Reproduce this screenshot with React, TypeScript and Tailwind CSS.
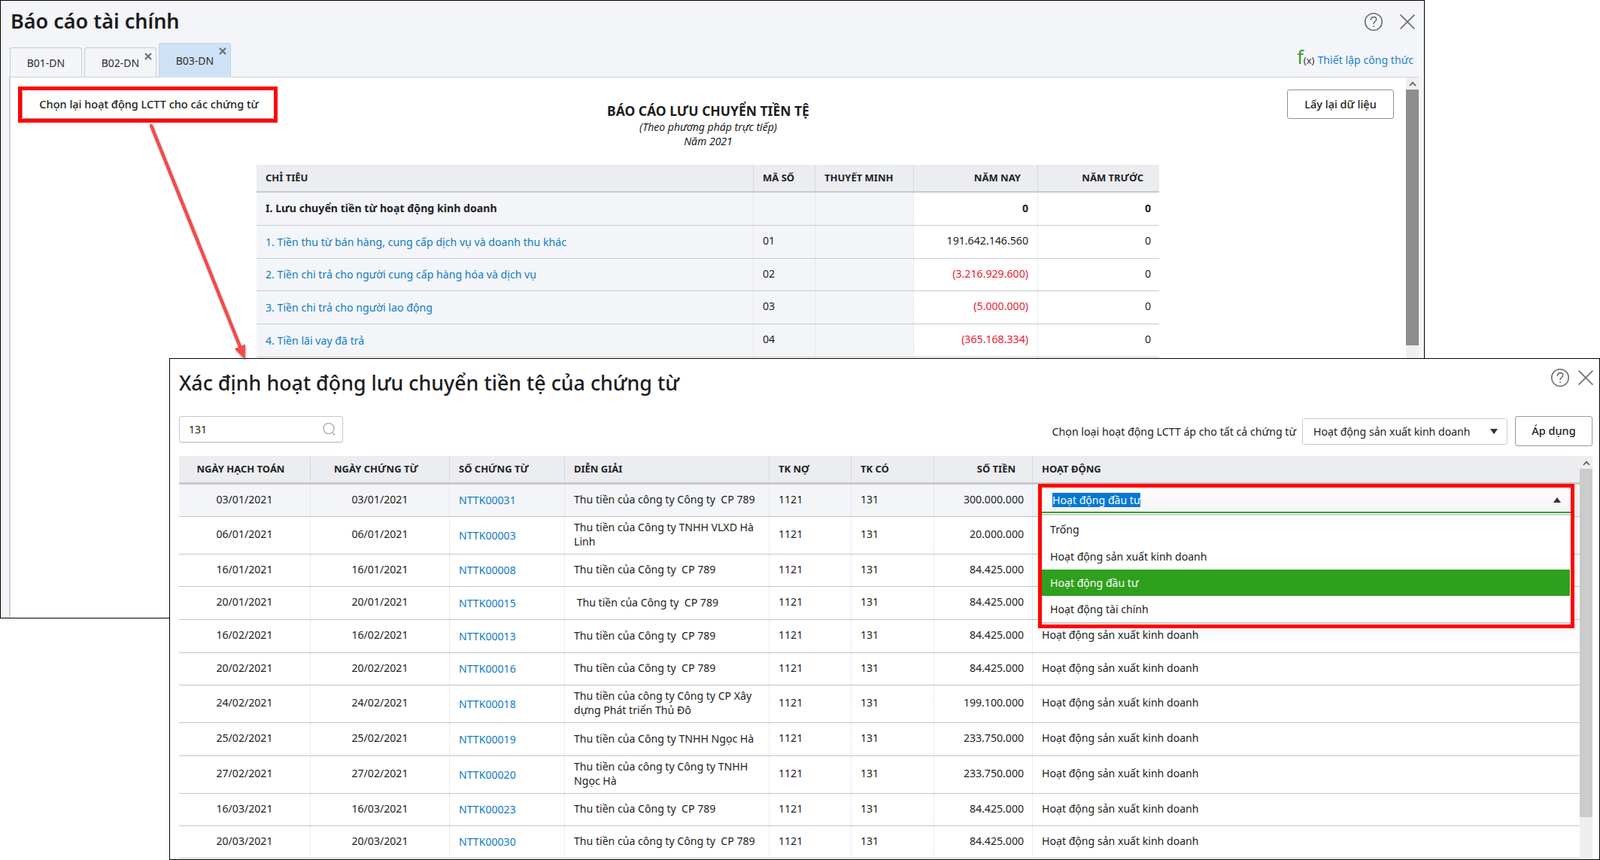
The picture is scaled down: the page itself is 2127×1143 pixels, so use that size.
import React from "react";

const Help = () => (
  <svg width="26" height="26" viewBox="0 0 26 26" fill="none" stroke="#6f6f6f" strokeWidth="1.6" className="shrink-0">
    <circle cx="13" cy="13" r="11.3" />
    <path d="M9.4 10.2c0-2.2 1.6-3.6 3.7-3.6s3.6 1.3 3.6 3.2c0 1.5-.9 2.3-2 3.1-1 .7-1.6 1.3-1.6 2.7" strokeLinecap="round" />
    <circle cx="13.1" cy="18.9" r="1" fill="#6f6f6f" stroke="none" />
  </svg>
);

const Close = () => (
  <svg width="20" height="20" viewBox="0 0 20 20" stroke="#6f6f6f" strokeWidth="1.7" className="shrink-0">
    <path d="M0.6 0.6 19.4 19.4M19.4 0.6 0.6 19.4" />
  </svg>
);

const TabX = () => (
  <svg width="10" height="10" viewBox="0 0 10 10" stroke="#6b7075" strokeWidth="2.2">
    <path d="M1 1 9 9M9 1 1 9" />
  </svg>
);

const Up = () => (
  <svg width="10" height="7" viewBox="0 0 10 7" fill="none" stroke="#5f5f5f" strokeWidth="1.8">
    <path d="M1 6 5 1.8 9 6" />
  </svg>
);

const backRows = [
  { name: "1. Tiền thu từ bán hàng, cung cấp dịch vụ và doanh thu khác", code: "01", now: "191.642.146.560", neg: false, h: "h-[44px]" },
  { name: "2. Tiền chi trả cho người cung cấp hàng hóa và dịch vụ", code: "02", now: "(3.216.929.600)", neg: true, h: "h-[43px]" },
  { name: "3. Tiền chi trả cho người lao động", code: "03", now: "(5.000.000)", neg: true, h: "h-[44px]" },
  { name: "4. Tiền lãi vay đã trả", code: "04", now: "(365.168.334)", neg: true, h: "h-[44px]" },
];

const backGrid = "grid grid-cols-[661px_82px_131px_165px_161px]";
const frontGrid = "grid grid-cols-[175px_185px_153px_272px_109px_110px_131px_727px]";
const dotted = "border-r border-dotted border-[#dcdcdc]";
const act = "Hoạt động sản xuất kinh doanh";

const frontRows = [
  { d: "03/01/2021", doc: "NTTK00031", t: "Thu tiền của công ty Công ty  CP 789", a: "300.000.000", h: "h-[43px]", act: "" },
  { d: "06/01/2021", doc: "NTTK00003", t: "Thu tiền của Công ty TNHH VLXD Hà Linh", a: "20.000.000", h: "h-[50px]", act: "" },
  { d: "16/01/2021", doc: "NTTK00008", t: "Thu tiền của Công ty  CP 789", a: "84.425.000", h: "h-[43px]", act: "" },
  { d: "20/01/2021", doc: "NTTK00015", t: " Thu tiền của Công ty  CP 789", a: "84.425.000", h: "h-[44px]", act: "" },
  { d: "16/02/2021", doc: "NTTK00013", t: "Thu tiền của Công ty  CP 789", a: "84.425.000", h: "h-[44px]", act },
  { d: "20/02/2021", doc: "NTTK00016", t: "Thu tiền của Công ty  CP 789", a: "84.425.000", h: "h-[43px]", act },
  { d: "24/02/2021", doc: "NTTK00018", t: "Thu tiền của công ty Công ty CP Xây dựng Phát triển Thủ Đô", a: "199.100.000", h: "h-[50px]", act },
  { d: "25/02/2021", doc: "NTTK00019", t: "Thu tiền của Công ty TNHH Ngọc Hà", a: "233.750.000", h: "h-[44px]", act },
  { d: "27/02/2021", doc: "NTTK00020", t: "Thu tiền của công ty Công ty TNHH Ngọc Hà", a: "233.750.000", h: "h-[50px]", act },
  { d: "16/03/2021", doc: "NTTK00023", t: "Thu tiền của Công ty  CP 789", a: "84.425.000", h: "h-[43px]", act },
  { d: "20/03/2021", doc: "NTTK00030", t: "Thu tiền của công ty Công ty  CP 789", a: "84.425.000", h: "h-[43px]", act },
];

function BackWindow() {
  return (
    <div className="absolute left-0 top-0 flex h-[822px] w-[1894px] flex-col overflow-hidden border border-black bg-[#f3f5f9]">
      <div className="flex h-[55px] shrink-0 items-start justify-between pl-[13px] pr-[12px]">
        <h1 className="mt-[9px] text-[27px] font-semibold leading-[36px] text-[#1c1c1c]">Báo cáo tài chính</h1>
        <div className="mt-[15px] flex items-center gap-[22px]">
          <Help />
          <Close />
        </div>
      </div>
      <div className="flex h-[46px] shrink-0 items-end pl-[12px] pr-[14px]">
        <div className="mb-[-1px] flex h-[46px] items-end text-[14px] text-[#2b2b2b]">
          <div className="relative flex h-[40px] w-[96px] items-center justify-center rounded-t-[3px] border border-b-0 border-[#c9ccd2]">B01-DN</div>
          <div className="relative ml-[3px] flex h-[40px] w-[96px] items-center justify-center rounded-t-[3px] border border-b-0 border-[#c9ccd2]">
            B02-DN
            <span className="absolute right-[5px] top-[6px] flex"><TabX /></span>
          </div>
          <div className="relative ml-[3px] flex h-[46px] w-[96px] items-center justify-center rounded-t-[3px] border border-b-0 border-[#c4d3e4] bg-[#cde2f7]">
            B03-DN
            <span className="absolute right-[5px] top-[5px] flex"><TabX /></span>
          </div>
        </div>
        <div className="mb-[10px] ml-auto flex items-baseline text-[14.15px] leading-[24px]">
          <span className="font-['Liberation_Serif',serif] text-[25px] leading-[24px] text-[#3b9c22]">f</span>
          <span className="mr-[4px] text-[13px] text-[#333333]">(x)</span>
          <a className="text-[#1b83cf]">Thiết lập công thức</a>
        </div>
      </div>
      <div className="mr-[7px] ml-[11px] flex min-h-0 flex-1 border-t border-l-2 border-[#cdd0d4] bg-white">
        <div className="min-w-0 flex-1">
          <div className="grid h-[116px] grid-cols-[1fr_auto_1fr]">
            <div>
              <div className="ml-[10px] mt-[12px] h-[48px] w-[345px] border-[5px] border-[#ff0000]">
                <button className="flex h-full w-full items-center justify-center rounded-[3px] border-b border-l border-[#999999] bg-white pl-[2px] text-[14.5px] font-medium text-[#1c1c1c]">
                  Chọn lại hoạt động LCTT cho các chứng từ
                </button>
              </div>
            </div>
            <div className="pt-[33px] text-center text-[#1c1c1c]">
              <div className="text-[17.5px] font-bold leading-[23px]">BÁO CÁO LƯU CHUYỂN TIỀN TỆ</div>
              <div className="text-[14px] italic leading-[19px]">(Theo phương pháp trực tiếp)</div>
              <div className="text-[14px] italic leading-[19px]">Năm 2021</div>
            </div>
            <div className="flex items-start justify-end pr-[16px] pt-[16px]">
              <button className="h-[39px] w-[142px] rounded-[3px] border border-[#8f8f8f] bg-white text-[14.5px] font-medium text-[#1c1c1c]">Lấy lại dữ liệu</button>
            </div>
          </div>
          <div className="ml-[327px] w-[1200px] text-[14.15px] text-[#222222]">
            <div className={`${backGrid} h-[37px] border-b-[2px] border-[#c8c8c8] bg-[#ebedf0] text-[13px] font-bold`}>
              <div className="flex items-center border-r border-[#d8d9dc] pl-3">CHỈ TIÊU</div>
              <div className="flex items-center border-r border-[#d8d9dc] pl-3">MÃ SỐ</div>
              <div className="flex items-center border-r border-[#d8d9dc] pl-3">THUYẾT MINH</div>
              <div className="flex items-center justify-end border-r border-[#d8d9dc] pr-[22px]">NĂM NAY</div>
              <div className="flex items-center justify-end pr-[21px]">NĂM TRƯỚC</div>
            </div>
            <div className={`${backGrid} h-[44px] border-b border-[#c8ccd2] font-bold`}>
              <div className={`flex items-center bg-[#f3f5f9] pb-[2px] pl-3 ${dotted}`}>I. Lưu chuyển tiền từ hoạt động kinh doanh</div>
              <div className={`bg-[#f3f5f9] ${dotted}`} />
              <div className={`bg-[#f3f5f9] ${dotted}`} />
              <div className={`flex items-center justify-end pb-[2px] pr-3 ${dotted}`}>0</div>
              <div className="flex items-center justify-end pb-[2px] pr-[11px]">0</div>
            </div>
            {backRows.map((r) => (
              <div key={r.code} className={`${backGrid} ${r.h} border-b border-[#c8ccd2]`}>
                <div className={`flex items-center bg-[#f3f5f9] pl-3 text-[#0f7cc4] ${dotted}`}>{r.name}</div>
                <div className={`flex items-center bg-[#f3f5f9] pb-[3px] pl-3 ${dotted}`}>{r.code}</div>
                <div className={`bg-[#f3f5f9] ${dotted}`} />
                <div className={`flex items-center justify-end pb-[3px] pr-3 ${dotted} ${r.neg ? "text-[#e8202e]" : ""}`}>{r.now}</div>
                <div className="flex items-center justify-end pb-[3px] pr-[11px]">0</div>
              </div>
            ))}
          </div>
        </div>
        <div className="flex w-[17px] shrink-0 flex-col bg-[#f0f0f0]">
          <div className="flex h-[16px] items-center justify-center pt-[1px]"><Up /></div>
          <div className="h-[340px] bg-[#8e8e8e]" />
        </div>
      </div>
    </div>
  );
}

function Dropdown() {
  return (
    <div className="absolute left-[1154px] top-[37px] h-[192px] w-[713px] border-[5px] border-[#ff0000] bg-white text-[14.1px] text-[#222222] shadow-[0_4px_14px_rgba(0,0,0,0.06)]">
      <div className="flex h-[34px] items-center justify-between border-b-2 border-[#3b9a2c] bg-gradient-to-b from-white to-[#f4f4f4] pl-[14px] pr-[13px]">
        <span className="bg-[#0078d7] leading-[19px] text-white">Hoạt động đầu tư</span>
        <svg width="10" height="7" viewBox="0 0 10 7" fill="#333333"><path d="M5 0 10 7H0z" /></svg>
      </div>
      <div className="mt-[1px] border-t-2 border-b-2 border-[#c9ccd0] pr-[1px] pt-0">
        <div className="flex h-[37px] items-center pl-[11px] pt-[1px]">Trống</div>
        <div className="flex h-[35px] items-center pl-[11px]">{act}</div>
        <div className="flex h-[35px] items-center bg-[#2ea01e] pl-[11px] text-white">Hoạt động đầu tư</div>
        <div className="flex h-[35px] items-center pl-[11px]">Hoạt động tài chính</div>
      </div>
    </div>
  );
}

function FrontWindow() {
  return (
    <div className="absolute left-[225px] top-[476px] flex h-[667px] w-[1902px] flex-col overflow-hidden border border-black bg-white text-[#222222]">
      <div className="flex h-[76px] shrink-0 items-start justify-between pl-3 pr-[8px]">
        <h2 className="mt-[14px] text-[26.8px] font-medium leading-[36px] text-[#1c1c1c]">Xác định hoạt động lưu chuyển tiền tệ của chứng từ</h2>
        <div className="mt-[12px] flex items-center gap-[11px]">
          <Help />
          <Close />
        </div>
      </div>
      <div className="flex h-[53px] shrink-0 items-start justify-between pl-3 pr-[9px]">
        <div className="flex h-[35px] w-[218px] items-center justify-between rounded-[3px] border border-[#c8c8c8] pl-[12px] pr-[8px] text-[14px] shadow-[0_1px_1px_rgba(0,0,0,0.12)]">
          <span>131</span>
          <svg width="18" height="20" viewBox="0 0 18 20" fill="none" stroke="#b4b4b4" strokeWidth="1.6">
            <circle cx="8" cy="8.5" r="7" />
            <path d="M13.5 14 16 17.5" />
          </svg>
        </div>
        <div className="flex h-[40px] items-center text-[14.1px]">
          <span className="mr-[8px] pt-[1px] text-[14.2px]">Chọn loại hoạt động LCTT áp cho tất cả chứng từ</span>
          <div className="flex h-[35px] w-[273px] items-center justify-between rounded-[3px] border border-[#cccccc] pl-[14px] pr-[12px]">
            <span className="pt-[1px]">{act}</span>
            <svg width="10" height="7" viewBox="0 0 10 7" fill="#333333"><path d="M0 0h10L5 7z" /></svg>
          </div>
          <button className="ml-[10px] h-[40px] w-[103px] rounded-[3px] border border-[#999999] bg-white text-[14.5px] font-medium text-[#1c1c1c]">Áp dụng</button>
        </div>
      </div>
      <div className="relative flex min-h-0 flex-1 pl-3 pr-[9px]">
        <div className="w-[1862px] shrink-0 text-[14.1px]">
          <div className={`${frontGrid} h-[38px] border-b-[3px] border-[#c8c8c8] bg-[#ebedf0] pt-[1px] text-[13px] font-bold text-[#222222]`}>
            <div className="flex items-center justify-center border-r border-[#d8d9dc] pr-[10px]">NGÀY HẠCH TOÁN</div>
            <div className="flex items-center justify-center border-r border-[#d8d9dc] pr-[10px]">NGÀY CHỨNG TỪ</div>
            <div className="flex items-center border-r border-[#d8d9dc] pl-3">SỐ CHỨNG TỪ</div>
            <div className="flex items-center border-r border-[#d8d9dc] pl-3">DIỄN GIẢI</div>
            <div className="flex items-center border-r border-[#d8d9dc] pl-3">TK NỢ</div>
            <div className="flex items-center border-r border-[#d8d9dc] pl-3">TK CÓ</div>
            <div className="flex items-center justify-end border-r border-[#d8d9dc] pr-[22px]">SỐ TIỀN</div>
            <div className="flex items-center pl-3">HOẠT ĐỘNG</div>
          </div>
          {frontRows.map((r, i) => (
            <div key={r.doc} className={`${frontGrid} ${r.h} border-b border-[#c6c6c6] ${i === 0 ? "bg-[#f3f5f9]" : ""}`}>
              <div className={`flex items-center justify-center pb-[3px] ${dotted}`}>{r.d}</div>
              <div className={`flex items-center justify-center pb-[3px] ${dotted}`}>{r.d}</div>
              <div className={`flex items-center pl-3 text-[#0f7cc4] ${dotted}`}>{r.doc}</div>
              <div className={`flex items-center whitespace-pre-wrap pb-[3px] pl-3 pr-[10px] leading-[19px] ${dotted}`}>{r.t}</div>
              <div className={`flex items-center pb-[3px] pl-3 ${dotted}`}>1121</div>
              <div className={`flex items-center pb-[3px] pl-3 ${dotted}`}>131</div>
              <div className={`flex items-center justify-end pb-[3px] pr-[11px] ${dotted}`}>{r.a}</div>
              <div className="flex items-center pb-[3px] pl-3">{r.act}</div>
            </div>
          ))}
        </div>
        <div className="flex w-[17px] shrink-0 flex-col bg-[#efefef]">
          <div className="flex h-[17px] items-center justify-center pt-[1px]"><Up /></div>
          <div className="h-[463px] bg-[#cbcbcb]" />
        </div>
        <Dropdown />
      </div>
    </div>
  );
}

export default function App() {
  return (
    <div className="relative h-[1143px] w-[2127px] overflow-hidden bg-white font-['Noto_Sans',sans-serif]">
      <BackWindow />
      <FrontWindow />
      <svg
        className="absolute left-[190px] top-[160px] drop-shadow-[1px_2px_1px_rgba(0,0,0,0.35)]"
        width="150"
        height="330"
        viewBox="190 160 150 330"
      >
        <path d="M201 167 320 463" stroke="#f44a4a" strokeWidth="4.4" strokeLinecap="round" />
        <path d="M325.5 477.5 326 457.5 311.8 463.4z" fill="#f44a4a" />
      </svg>
    </div>
  );
}
